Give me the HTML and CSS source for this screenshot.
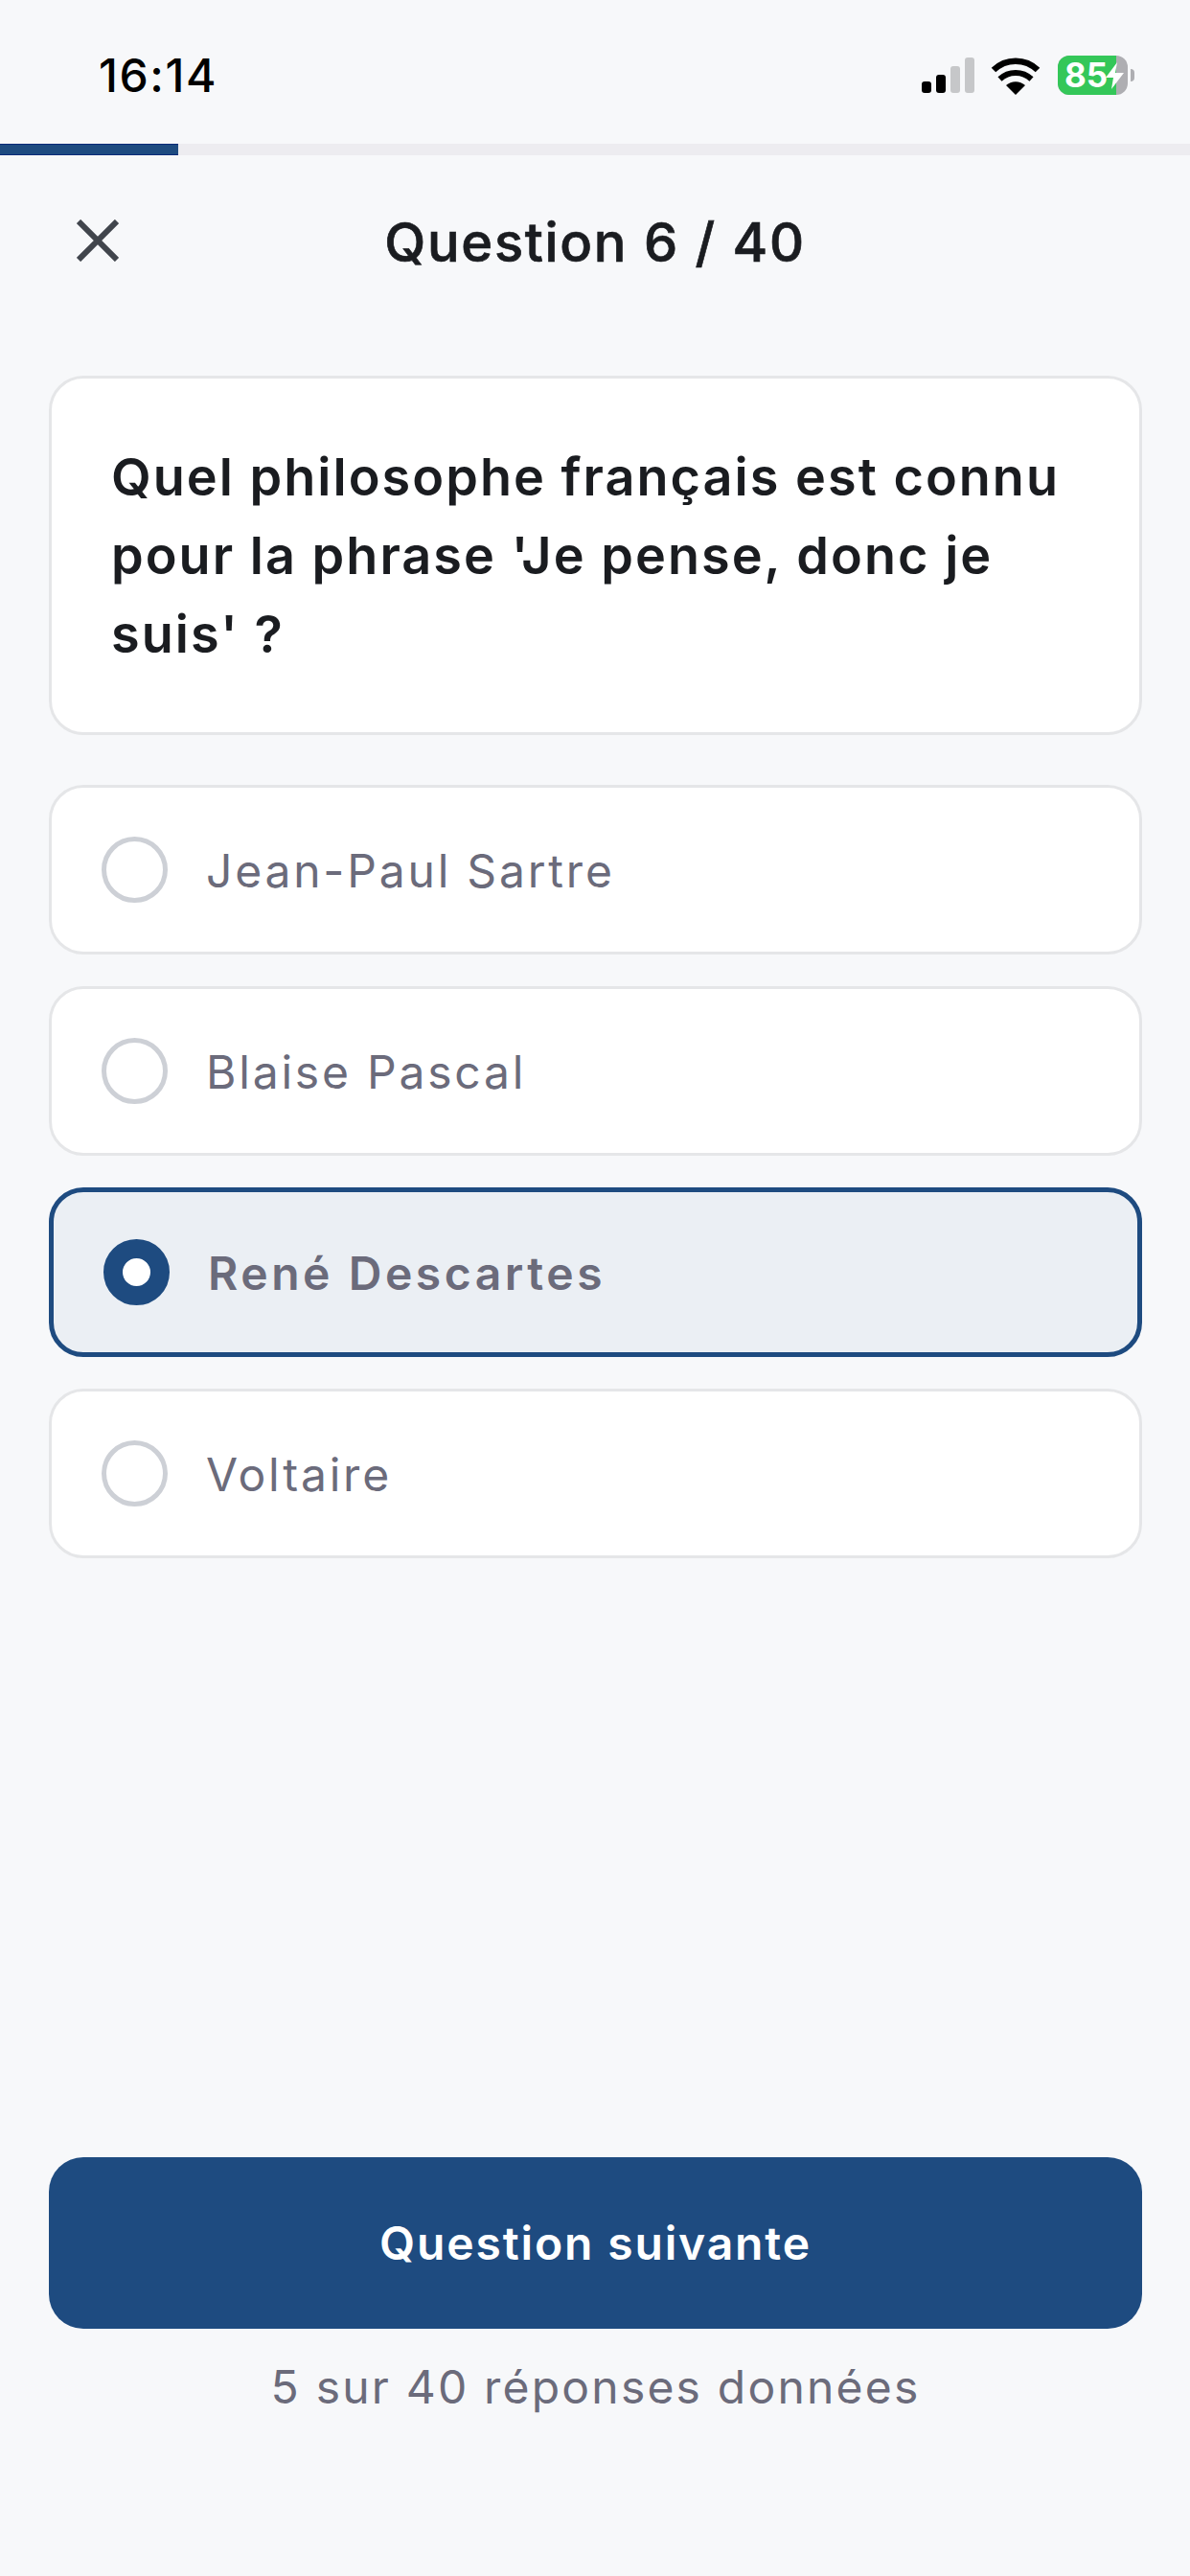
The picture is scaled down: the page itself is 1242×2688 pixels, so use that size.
FILE: index.html
```html
<!DOCTYPE html>
<html lang="fr">
<head>
<meta charset="utf-8">
<title>Question 6 / 40</title>
<link rel="stylesheet" href="styles.css">
</head>
<body>
<div class="screen">
  <div class="status">
    <span class="time">16:14</span>
    <div class="status-icons">
      <svg class="signal" width="55" height="37" viewBox="0 0 55 37"><rect x="0" y="25" width="10" height="12" rx="3" fill="#000"/><rect x="15" y="18" width="10" height="19" rx="3" fill="#000"/><rect x="30" y="9" width="10" height="28" rx="3" fill="#c6c7c9"/><rect x="45" y="0" width="10" height="37" rx="3" fill="#c6c7c9"/></svg>
      <svg class="wifi" width="52" height="40" viewBox="0 0 52 40"><path d="M26 40 L16 30 A15 15 0 0 1 36 30 Z" fill="#000"/><path d="M9.500 23.500 A24 24 0 0 1 42.500 23.500" fill="none" stroke="#000" stroke-width="6"/><path d="M3 14 A33 33 0 0 1 49 14" fill="none" stroke="#000" stroke-width="6.500"/></svg>
      <div class="battery">
        <div class="battery-body"><div class="battery-fill"></div><span class="battery-text">85</span>
          <svg class="bolt" width="19" height="28" viewBox="0 0 19 28"><path d="M12 0 L0 16 H8 L6 28 L19 11 H10 Z" fill="#fff"/></svg>
        </div>
        <div class="battery-tip"></div>
      </div>
    </div>
  </div>
  <div class="progress"><div class="progress-fill"></div></div>
  <div class="header">
    <svg class="close" width="44" height="44" viewBox="0 0 44 44"><path d="M2 2 L42 42 M42 2 L2 42" fill="none" stroke="#41454c" stroke-width="6"/></svg>
    <h1 class="title">Question 6 / 40</h1>
  </div>
  <main class="content">
    <div class="question">Quel philosophe français est connu pour la phrase 'Je pense, donc je suis' ?</div>
    <div class="options">
      <div class="option"><span class="radio"></span><span class="label">Jean-Paul Sartre</span></div>
      <div class="option"><span class="radio"></span><span class="label">Blaise Pascal</span></div>
      <div class="option selected"><span class="radio"></span><span class="label">René Descartes</span></div>
      <div class="option"><span class="radio"></span><span class="label">Voltaire</span></div>
    </div>
    <div class="footer">
      <button class="next">Question suivante</button>
      <p class="count">5 sur 40 réponses données</p>
    </div>
  </main>
</div>
</body>
</html>
```

FILE: styles.css
```css
* { box-sizing: border-box; }
html, body { margin: 0; padding: 0; }
body { background: #f7f8fa; font-family: Inter, "Liberation Sans", sans-serif; }
.screen { width: 1242px; height: 2688px; display: flex; flex-direction: column; background: #f7f8fa; }
.status { height: 150px; display: flex; justify-content: space-between; align-items: flex-start; padding: 54px 0 0 103px; }
.time { font-size: 48px; line-height: 50px; font-weight: 500; letter-spacing: 1.6px; color: #000; }
.status-icons { display: flex; align-items: center; gap: 17px; padding-top: 4px; margin-right: 58px; }
.battery { display: flex; align-items: center; gap: 3px; margin-left: 1px; }
.battery-body { position: relative; width: 73px; height: 41px; border-radius: 12px; background: #aeaeb2; overflow: hidden; display: flex; align-items: center; padding-left: 7px; }
.battery-fill { position: absolute; left: 0; top: 0; bottom: 0; width: 61px; background: #34c759; }
.battery-text { position: relative; font-size: 35px; line-height: 41px; font-weight: 700; color: #fff; }
.bolt { position: absolute; left: 50px; top: 7px; }
.battery-tip { width: 4px; height: 13px; border-radius: 0 4px 4px 0; background: #aeaeb2; }
.progress { height: 12px; background: #edecf0; }
.progress-fill { width: 186px; height: 100%; background: #1e4b80; border-top: 1px solid #0c2a78; border-bottom: 1px solid #0c2a78; }
.header { position: relative; height: 182px; display: flex; align-items: center; justify-content: center; }
.close { position: absolute; left: 80px; top: 67px; }
.title { margin: 0; font-size: 56px; line-height: 64px; font-weight: 500; letter-spacing: 1.7px; -webkit-text-stroke: 0.7px #1a1c20; color: #1a1c20; }
.content { flex: 1; display: flex; flex-direction: column; padding: 48px 50px 0 51px; }
.question { height: 375px; padding: 62px 62px; background: #fff; border: 3px solid #e5e6e8; border-radius: 36px; font-size: 54px; line-height: 82px; font-weight: 600; letter-spacing: 2.02px; color: #1a1c20; }
.options { display: flex; flex-direction: column; gap: 33px; margin-top: 52px; }
.option { height: 177px; display: flex; align-items: center; padding-left: 52px; background: #fff; border: 3px solid #e5e6e8; border-radius: 36px; }
.radio { width: 69px; height: 69px; border: 5px solid #cdd0d6; border-radius: 50%; flex: none; }
.label { margin-left: 40px; padding-top: 2px; font-size: 48px; line-height: 60px; letter-spacing: 2.8px; color: #6b6b7b; }
.option.selected { background: #ebeff4; border: 5px solid #1e4b80; }
.option.selected .radio { background: #fff; border: 20px solid #1e4b80; }
.option.selected .label { font-weight: 600; letter-spacing: 3.55px; }
.footer { margin-top: auto; padding-bottom: 167px; }
.next { display: block; width: 100%; height: 179px; border: 0; border-radius: 36px; background: #1e4b80; color: #fff; font-family: inherit; font-size: 48px; font-weight: 600; letter-spacing: 1.85px; }
.count { margin: 31px 0 0; text-align: center; font-size: 48px; line-height: 60px; letter-spacing: 2.2px; color: #6b6b7b; }
```
